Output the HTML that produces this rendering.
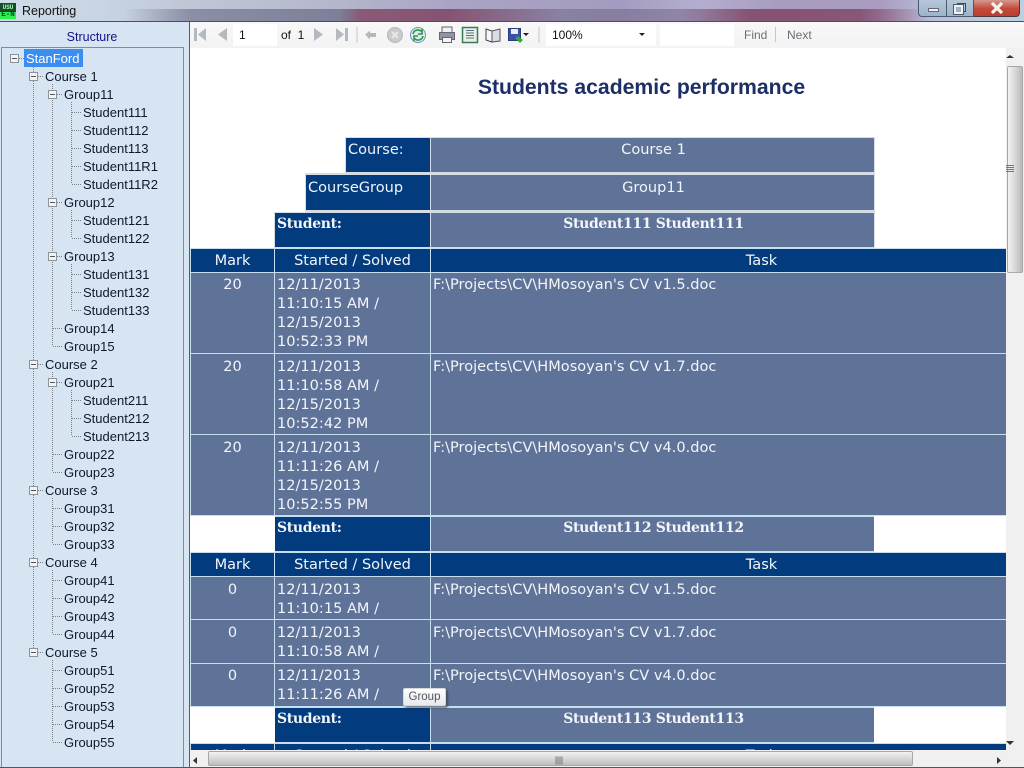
<!DOCTYPE html>
<html><head><meta charset="utf-8"><title>Reporting</title>
<style>
html,body{margin:0;padding:0}
body{width:1024px;height:768px;overflow:hidden;position:relative;background:#d7e5f3;font-family:"Liberation Sans",sans-serif;color:#111}
div,svg,span{position:absolute;box-sizing:border-box}
.t{font-size:13px;line-height:18px;height:18px;white-space:nowrap;color:#10182a}
.c{font-family:"DejaVu Sans",sans-serif;font-size:14.55px;line-height:19px;color:#f2f5fa;white-space:nowrap;overflow:hidden}
.n{background:#023b7e}.s{background:#5f7399}
.m{text-align:center}
.b{font-family:"DejaVu Serif",serif;font-weight:bold;font-size:14px;letter-spacing:-.33px}
.p{padding:2px 0 0 2px}
</style></head><body>
<!-- title bar -->
<div style="left:0;top:0;width:1024px;height:22px;background:linear-gradient(90deg,#d0dbe8 0,#c8d4e2 100px,#c0c8d8 180px,#b4b6cc 340px,#aaa4c4 450px,#a49cc0 620px,#b4aed0 700px,#a89cc0 780px,#a89cc0 880px,#b8bcd8 930px,#bcd0e2 1024px)"></div>
<div style="left:0;top:9px;width:1024px;height:12px;background:linear-gradient(90deg,rgba(0,0,0,0) 0,rgba(0,0,0,0) 125px,rgba(60,60,90,.4) 190px,rgba(60,60,90,.45) 340px,rgba(110,30,60,.6) 360px,rgba(110,30,60,.6) 450px,rgba(70,60,90,.3) 560px,rgba(70,50,80,.3) 680px,rgba(110,30,60,.6) 750px,rgba(110,30,60,.55) 860px,rgba(0,0,0,0) 930px)"></div>
<div style="left:0;top:21px;width:1024px;height:1px;background:#4c5058"></div>
<div style="left:0;top:3px;width:16px;height:16px;background:#2cf04c"></div>
<div style="left:0;top:3px;width:16px;height:9px;background:#1a4a28;color:#9fa;font:bold 6px/9px 'Liberation Mono',monospace;text-align:center;overflow:hidden">USU</div>
<div style="left:0;top:11px;width:16px;height:8px;color:#043;font:bold 7.5px/8px 'Liberation Mono',monospace;text-align:center;overflow:hidden">E-N</div>
<div style="left:22px;top:3px;font-size:12.5px;line-height:16px;color:#111;white-space:nowrap">Reporting</div>
<!-- window buttons -->
<div style="left:918px;top:0;width:29px;height:17px;background:linear-gradient(#b4c8da,#9db4c8);border:1px solid #4b5a6c;border-top:0;border-radius:0 0 0 4px"></div>
<div style="left:928px;top:8px;width:11px;height:4px;background:#eef2f6;border:1px solid #667"></div>
<div style="left:947px;top:0;width:27px;height:17px;background:linear-gradient(#b4c8da,#9db4c8);border:1px solid #4b5a6c;border-top:0;border-left:0"></div>
<div style="left:957px;top:3px;width:9px;height:9px;border:1px solid #445"></div>
<div style="left:954px;top:5px;width:9px;height:9px;border:2px solid #eef2f6;outline:1px solid #556;background:#9db4c8"></div>
<div style="left:974px;top:0;width:46px;height:17px;background:linear-gradient(#d59a8c,#c4493a 55%,#bb3f2e);border:1px solid #4b3a3c;border-top:0;border-left:0;border-radius:0 0 4px 0"></div>
<svg style="left:990px;top:2px" width="14" height="12"><path d="M2 1L12 11M12 1L2 11" stroke="#f4f2ea" stroke-width="3.2"/></svg>

<!-- left panel -->
<div style="left:0;top:22px;width:190px;height:746px;background:#d7e5f3"></div>
<div style="left:0;top:29px;width:184px;text-align:center;font-size:12.5px;line-height:16px;color:#16108a">Structure</div>
<div style="left:1px;top:47px;width:183px;height:721px;border:1px solid #7f8b97;border-bottom:0"></div>
<div style="left:189px;top:22px;width:1px;height:746px;background:#555c66"></div>
<div style="left:0;top:767px;width:1024px;height:1px;background:#555"></div>

<svg style="left:0;top:0" width="190" height="768" fill="none">
<g stroke="#7a7f88" stroke-dasharray="1 1">
<path d="M33.5 65V652M52.5 84V346M52.5 372V472M52.5 498V544M52.5 570V634M52.5 660V742M71.5 102V184M71.5 210V238M71.5 264V310M71.5 390V436"/>
<path d="M19 58.5H25M38 76.5H44M38 364.5H44M38 490.5H44M38 562.5H44M38 652.5H44M57 94.5H63M57 202.5H63M57 256.5H63M57 382.5H63"/>
<path d="M53 328.5H63M53 346.5H63M53 454.5H63M53 472.5H63M53 508.5H63M53 526.5H63M53 544.5H63M53 580.5H63M53 598.5H63M53 616.5H63M53 634.5H63M53 670.5H63M53 688.5H63M53 706.5H63M53 724.5H63M53 742.5H63"/>
<path d="M72 112.5H82M72 130.5H82M72 148.5H82M72 166.5H82M72 184.5H82M72 220.5H82M72 238.5H82M72 274.5H82M72 292.5H82M72 310.5H82M72 400.5H82M72 418.5H82M72 436.5H82"/>
</g>
<g fill="#f1f3f5" stroke="#8b939c">
<rect x="10.5" y="54.5" width="8" height="8"/><rect x="29.5" y="72.5" width="8" height="8"/><rect x="29.5" y="360.5" width="8" height="8"/><rect x="29.5" y="486.5" width="8" height="8"/><rect x="29.5" y="558.5" width="8" height="8"/><rect x="29.5" y="648.5" width="8" height="8"/>
<rect x="48.5" y="90.5" width="8" height="8"/><rect x="48.5" y="198.5" width="8" height="8"/><rect x="48.5" y="252.5" width="8" height="8"/><rect x="48.5" y="378.5" width="8" height="8"/>
</g>
<path stroke="#555" d="M12 58.5H17M31 76.5H36M31 364.5H36M31 490.5H36M31 562.5H36M31 652.5H36M50 94.5H55M50 202.5H55M50 256.5H55M50 382.5H55"/>
</svg>

<div style="left:24px;top:49px;width:59px;height:18px;background:#3a8ef0"></div>
<div class="t" style="left:26px;top:50px;color:#fff">StanFord</div>
<div class="t" style="left:45px;top:68px">Course 1</div>
<div class="t" style="left:64px;top:86px">Group11</div>
<div class="t" style="left:83px;top:104px">Student111</div>
<div class="t" style="left:83px;top:122px">Student112</div>
<div class="t" style="left:83px;top:140px">Student113</div>
<div class="t" style="left:83px;top:158px">Student11R1</div>
<div class="t" style="left:83px;top:176px">Student11R2</div>
<div class="t" style="left:64px;top:194px">Group12</div>
<div class="t" style="left:83px;top:212px">Student121</div>
<div class="t" style="left:83px;top:230px">Student122</div>
<div class="t" style="left:64px;top:248px">Group13</div>
<div class="t" style="left:83px;top:266px">Student131</div>
<div class="t" style="left:83px;top:284px">Student132</div>
<div class="t" style="left:83px;top:302px">Student133</div>
<div class="t" style="left:64px;top:320px">Group14</div>
<div class="t" style="left:64px;top:338px">Group15</div>
<div class="t" style="left:45px;top:356px">Course 2</div>
<div class="t" style="left:64px;top:374px">Group21</div>
<div class="t" style="left:83px;top:392px">Student211</div>
<div class="t" style="left:83px;top:410px">Student212</div>
<div class="t" style="left:83px;top:428px">Student213</div>
<div class="t" style="left:64px;top:446px">Group22</div>
<div class="t" style="left:64px;top:464px">Group23</div>
<div class="t" style="left:45px;top:482px">Course 3</div>
<div class="t" style="left:64px;top:500px">Group31</div>
<div class="t" style="left:64px;top:518px">Group32</div>
<div class="t" style="left:64px;top:536px">Group33</div>
<div class="t" style="left:45px;top:554px">Course 4</div>
<div class="t" style="left:64px;top:572px">Group41</div>
<div class="t" style="left:64px;top:590px">Group42</div>
<div class="t" style="left:64px;top:608px">Group43</div>
<div class="t" style="left:64px;top:626px">Group44</div>
<div class="t" style="left:45px;top:644px">Course 5</div>
<div class="t" style="left:64px;top:662px">Group51</div>
<div class="t" style="left:64px;top:680px">Group52</div>
<div class="t" style="left:64px;top:698px">Group53</div>
<div class="t" style="left:64px;top:716px">Group54</div>
<div class="t" style="left:64px;top:734px">Group55</div>

<!-- toolbar -->
<div style="left:190px;top:22px;width:834px;height:26px;background:linear-gradient(#f8f8f8,#f3f3f3)"></div>
<div style="left:233px;top:24px;width:44px;height:22px;background:#fff"></div>
<div style="left:239px;top:27px;font-size:12px;line-height:16px">1</div>
<div style="left:281px;top:27px;font-size:12px;line-height:16px;white-space:nowrap">of&nbsp; 1</div>
<div style="left:546px;top:24px;width:110px;height:22px;background:#fff"></div>
<div style="left:552px;top:27px;font-size:12px;line-height:16px">100%</div>
<div style="left:660px;top:24px;width:74px;height:22px;background:#fff"></div>
<div style="left:744px;top:27px;font-size:12px;line-height:16px;color:#6b6f75">Find</div>
<div style="left:787px;top:27px;font-size:12px;line-height:16px;color:#6b6f75">Next</div>
<svg style="left:190px;top:22px" width="500" height="26" fill="none">
<g fill="#b4b9bf">
<rect x="4" y="6" width="3" height="13"/><path d="M16 6V19L8 12.5Z"/>
<path d="M37 6V19L28 12.5Z"/>
<path d="M124 6V19L133 12.5Z"/>
<path d="M146 6V19L154 12.5Z"/><rect x="155" y="6" width="3" height="13"/>
<path d="M175 12.5L180 8.5V11H186V15H180V17.5Z"/>
</g>
<path d="M167 5V21M259 5V21M349 5V21" stroke="#c4c6c9"/>
<circle cx="205" cy="13" r="7.5" fill="#c8cacc" stroke="#b5b7ba"/>
<path d="M202 10L208 16M208 10L202 16" stroke="#e8e8e8" stroke-width="2"/>
<circle cx="228" cy="13" r="7.5" fill="#dfeaf6" stroke="#6e8fc4"/>
<path d="M223 12a5 5 0 0 1 8-3l1-1v4h-4M233 14a5 5 0 0 1-8 3l-1 1v-4h4" stroke="#2f9a3a" stroke-width="1.6"/>
<rect x="252" y="5" width="10" height="6" fill="#f0f0f0" stroke="#667"/>
<rect x="249.500" y="10.500" width="15" height="7" fill="#8d949c" stroke="#667"/>
<rect x="252.500" y="15.500" width="9" height="5" fill="#f4f4f4" stroke="#667"/>
<rect x="272.500" y="5.500" width="15" height="15" fill="#e6f0e4" stroke="#3d7a55" stroke-width="1.500"/>
<path d="M276 8.500H284M276 11H284M276 13.500H284M276 16H284" stroke="#5b6f8f"/>
<path d="M296 7L302 9V20L296 18Z" fill="#f4f6f8" stroke="#444"/>
<path d="M302 9L310 7V19L302 20Z" fill="#d8dee6" stroke="#555"/>
<rect x="318.500" y="6.500" width="12" height="12" fill="#3c4fa8" stroke="#2b3e78"/>
<rect x="321" y="7" width="7" height="5" fill="#e8ecf5"/>
<path d="M325 16L330 21L333 18L328 14Z" fill="#2faa3c"/>
<path d="M333 11H339L336 14Z" fill="#222"/>
<path d="M449 11H455L452 14Z" fill="#222"/>
</svg>
<div style="left:775px;top:27px;width:1px;height:15px;background:#c4c6c9"></div>

<!-- report -->
<div style="left:190px;top:48px;width:816px;height:702px;background:#fff;overflow:hidden">
<div style="left:0;top:27px;width:903px;text-align:center;font:bold 21.2px/26px 'Liberation Sans',sans-serif;color:#1c2f66;white-space:nowrap">Students academic performance</div>
</div>
<div style="left:190px;top:48px;width:816px;height:702px;overflow:hidden">
<div style="left:-190px;top:-48px;width:1024px;height:768px">
<div style="left:345px;top:137px;width:530px;height:37px;background:#d4dce4"></div>
<div style="left:305px;top:173px;width:570px;height:39px;background:#d4dce4"></div>
<div style="left:274px;top:212px;width:601px;height:36px;background:#d4dce4"></div>
<div class="c n p" style="left:346px;top:138px;width:84px;height:34px">Course:</div>
<div class="c s m p" style="left:431px;top:138px;width:443px;height:34px">Course 1</div>
<div class="c n p" style="left:306px;top:175px;width:124px;height:35px;padding-top:3px">CourseGroup</div>
<div class="c s m p" style="left:431px;top:175px;width:443px;height:35px;padding-top:3px">Group11</div>
<div class="c n p b" style="left:275px;top:213px;width:155px;height:34px">Student:</div>
<div class="c s m p b" style="left:431px;top:213px;width:443px;height:34px">Student111 Student111</div>

<div style="left:190px;top:248px;width:817px;height:502px;background:#c5dff0"></div>
<div style="left:190px;top:516px;width:85px;height:36px;background:#fff"></div>
<div style="left:874px;top:516px;width:133px;height:36px;background:#fff"></div>
<div style="left:190px;top:707px;width:85px;height:36px;background:#fff"></div>
<div style="left:874px;top:707px;width:133px;height:36px;background:#fff"></div>

<div class="c n m" style="left:191px;top:249px;width:83px;height:23px;padding-top:2px">Mark</div>
<div class="c n m" style="left:275px;top:249px;width:155px;height:23px;padding-top:2px">Started / Solved</div>
<div class="c n m" style="left:431px;top:249px;width:661px;height:23px;padding-top:2px">Task</div>

<div class="c s m" style="left:191px;top:273px;width:83px;height:80px;padding-top:2px">20</div>
<div class="c s p" style="left:275px;top:273px;width:155px;height:80px">12/11/2013<br>11:10:15 AM /<br>12/15/2013<br>10:52:33 PM</div>
<div class="c s p" style="left:431px;top:273px;width:575px;height:80px">F:\Projects\CV\HMosoyan's CV v1.5.doc</div>

<div class="c s m" style="left:191px;top:354px;width:83px;height:80px;padding-top:3px">20</div>
<div class="c s p" style="left:275px;top:354px;width:155px;height:80px;padding-top:3px">12/11/2013<br>11:10:58 AM /<br>12/15/2013<br>10:52:42 PM</div>
<div class="c s p" style="left:431px;top:354px;width:575px;height:80px;padding-top:3px">F:\Projects\CV\HMosoyan's CV v1.7.doc</div>

<div class="c s m" style="left:191px;top:435px;width:83px;height:80px;padding-top:3px">20</div>
<div class="c s p" style="left:275px;top:435px;width:155px;height:80px;padding-top:3px">12/11/2013<br>11:11:26 AM /<br>12/15/2013<br>10:52:55 PM</div>
<div class="c s p" style="left:431px;top:435px;width:575px;height:80px;padding-top:3px">F:\Projects\CV\HMosoyan's CV v4.0.doc</div>

<div class="c n p b" style="left:275px;top:517px;width:155px;height:34px">Student:</div>
<div class="c s m p b" style="left:431px;top:517px;width:443px;height:34px">Student112 Student112</div>

<div class="c n m" style="left:191px;top:553px;width:83px;height:23px;padding-top:2px">Mark</div>
<div class="c n m" style="left:275px;top:553px;width:155px;height:23px;padding-top:2px">Started / Solved</div>
<div class="c n m" style="left:431px;top:553px;width:661px;height:23px;padding-top:2px">Task</div>

<div class="c s m" style="left:191px;top:577px;width:83px;height:42px;padding-top:3px">0</div>
<div class="c s p" style="left:275px;top:577px;width:155px;height:42px;padding-top:3px">12/11/2013<br>11:10:15 AM /</div>
<div class="c s p" style="left:431px;top:577px;width:575px;height:42px;padding-top:3px">F:\Projects\CV\HMosoyan's CV v1.5.doc</div>

<div class="c s m" style="left:191px;top:620px;width:83px;height:43px;padding-top:3px">0</div>
<div class="c s p" style="left:275px;top:620px;width:155px;height:43px;padding-top:3px">12/11/2013<br>11:10:58 AM /</div>
<div class="c s p" style="left:431px;top:620px;width:575px;height:43px;padding-top:3px">F:\Projects\CV\HMosoyan's CV v1.7.doc</div>

<div class="c s m" style="left:191px;top:664px;width:83px;height:42px;padding-top:2px">0</div>
<div class="c s p" style="left:275px;top:664px;width:155px;height:42px">12/11/2013<br>11:11:26 AM /</div>
<div class="c s p" style="left:431px;top:664px;width:575px;height:42px">F:\Projects\CV\HMosoyan's CV v4.0.doc</div>

<div class="c n p b" style="left:275px;top:708px;width:155px;height:34px">Student:</div>
<div class="c s m p b" style="left:431px;top:708px;width:443px;height:34px">Student113 Student113</div>

<div class="c n m" style="left:191px;top:744px;width:83px;height:23px;padding-top:2px">Mark</div>
<div class="c n m" style="left:275px;top:744px;width:155px;height:23px;padding-top:2px">Started / Solved</div>
<div class="c n m" style="left:431px;top:744px;width:661px;height:23px;padding-top:2px">Task</div>
</div></div>

<!-- tooltip -->
<div style="left:403px;top:688px;width:43px;height:18px;background:linear-gradient(#fff,#e6e8ee);border:1px solid #d8d8d8;box-shadow:2px 2px 2px rgba(40,40,40,.55);border-radius:2px;font-size:11.5px;line-height:17px;text-align:center;color:#555">Group</div>

<!-- scrollbars -->
<div style="left:1006px;top:48px;width:18px;height:719px;background:#f0f0f0"></div>
<div style="left:190px;top:750px;width:834px;height:17px;background:#f0f0f0"></div>
<div style="left:1007px;top:66px;width:16px;height:207px;background:linear-gradient(90deg,#f2f2f2,#d8d8d8 50%,#b8b8b8);border:1px solid #a8a8a8;border-radius:2px"></div>
<div style="left:208px;top:751px;width:705px;height:15px;background:linear-gradient(#f2f2f2,#d8d8d8 50%,#bdbdbd);border:1px solid #a8a8a8;border-radius:2px"></div>
<svg style="left:190px;top:48px" width="834" height="719">
<path d="M816 10L820 7L824 10Z" fill="#333"/>
<path d="M816 693L820 697L824 693Z" fill="#333"/>
<path d="M7 709L3 712.500L7 716Z" fill="#333"/>
<path d="M807 709L811 712.500L807 716Z" fill="#333"/>
<path d="M816 117.500H824M816 119.500H824M816 121.500H824M816 123.500H824" stroke="#777"/>
<path d="M366 708.500V716.500M368 708.500V716.500M370 708.500V716.500M372 708.500V716.500" stroke="#777"/>
</svg>
</body></html>
